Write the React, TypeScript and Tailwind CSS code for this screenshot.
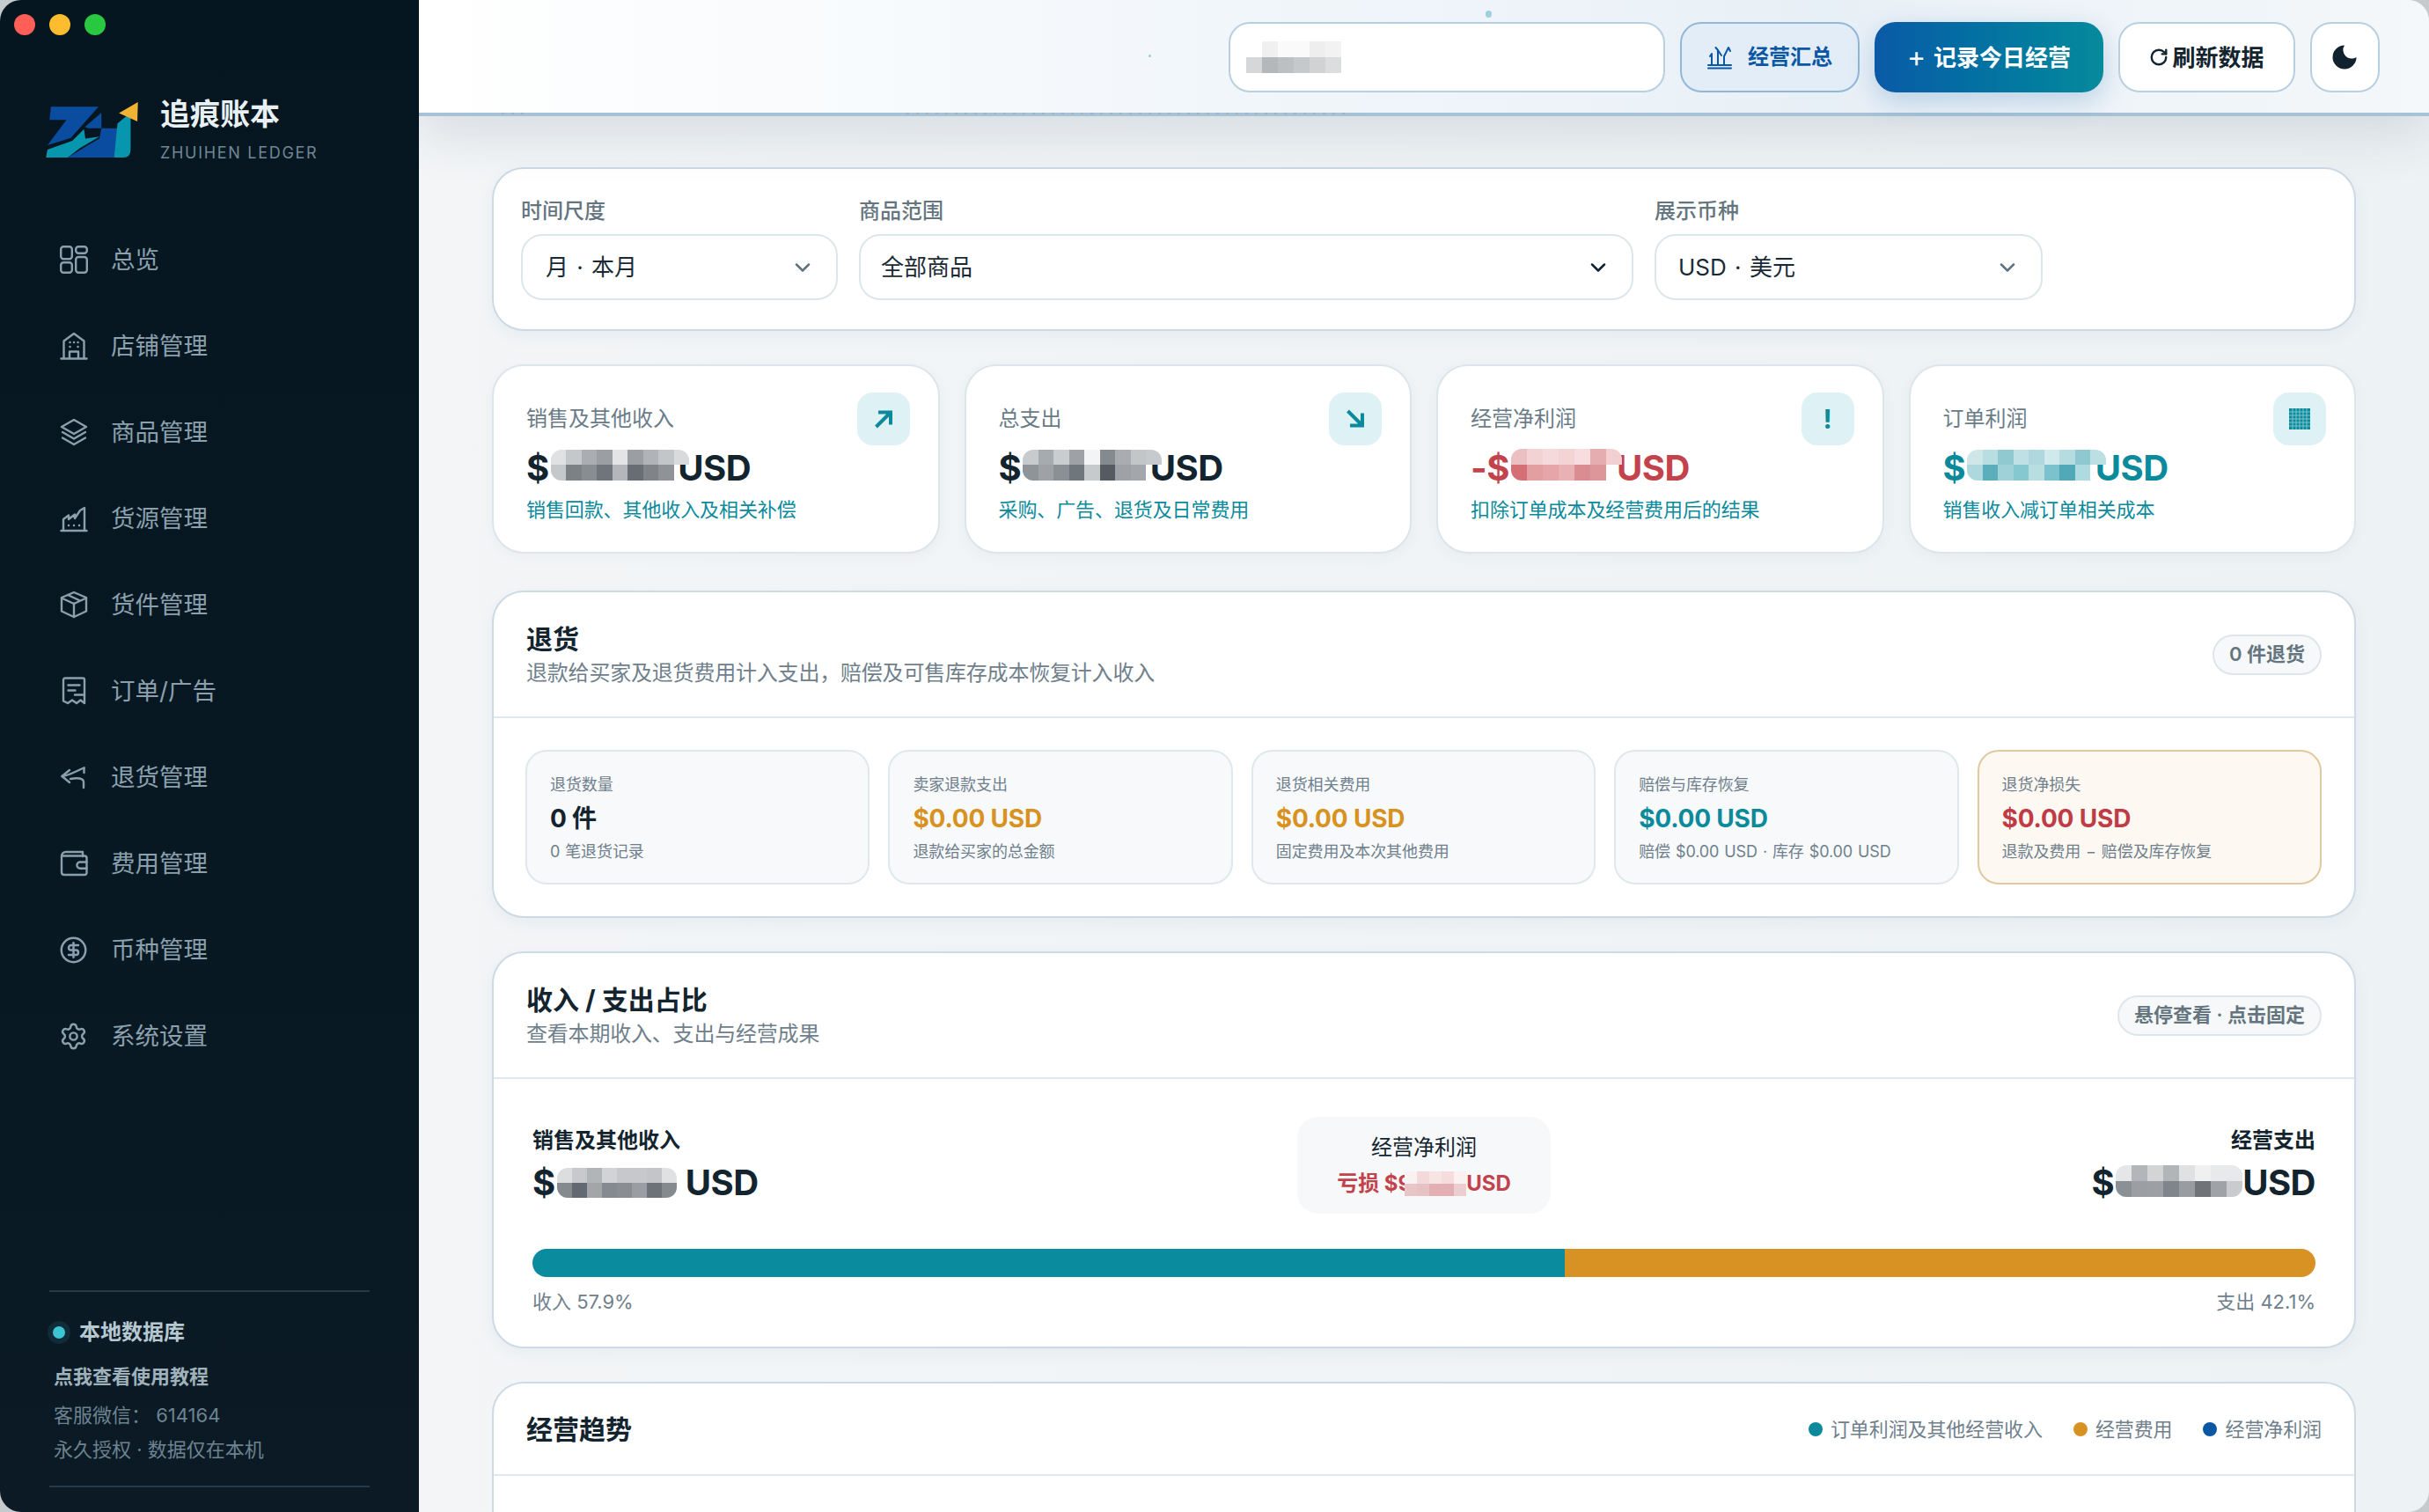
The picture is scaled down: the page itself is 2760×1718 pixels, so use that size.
import { CircleDollarSign, RotateCw, Settings } from 'lucide-react'
import type { ReactNode } from 'react'

const iconProps = {
  width: 32,
  height: 32,
  viewBox: '0 0 32 32',
  fill: 'none',
  stroke: 'currentColor',
  strokeWidth: 2.4,
  strokeLinecap: 'round' as const,
  strokeLinejoin: 'round' as const,
}

const OverviewIcon = () => (
  <svg {...iconProps}>
    <rect x="1.2" y="1.2" width="12.6" height="14" rx="3" />
    <rect x="18.2" y="1.2" width="12.6" height="7.6" rx="3" />
    <rect x="1.2" y="19.2" width="12.6" height="11.6" rx="3" />
    <rect x="18.2" y="13" width="12.6" height="17.8" rx="3" />
  </svg>
)

const StoreIcon = () => (
  <svg {...iconProps}>
    <path d="M1.5 30.5H30.5M4.5 30V10.5L16 2l11.5 8.5V30M11 30v-7.5h10V30" />
    <path d="M11.5 12h.1M16 12h.1M20.5 12h.1M11.5 17h.1M20.5 17h.1" />
  </svg>
)

const LayersIcon = () => (
  <svg {...iconProps}>
    <path d="M16 2 30 10l-14 8L2 10Z" />
    <path d="M3 16l13 7.5L29 16M3 22.5 16 30l13-7.5" />
  </svg>
)

const FactoryIcon = () => (
  <svg {...iconProps}>
    <path d="M1.5 30H30.5M4 30V17l6-4.5V17l7-5.5V16l6-9 5-3v26" />
    <path d="M10 24h.1M16 24h.1M22 24h.1" />
  </svg>
)

const BoxIcon = () => (
  <svg {...iconProps}>
    <path d="M16 2 30 8v15.5L16 30 2 23.5V8Z" />
    <path d="M2 8.5 16 15l14-6.5M16 15v15M9 5l14 6.5" />
  </svg>
)

const ReceiptIcon = () => (
  <svg {...iconProps}>
    <path d="M4 3.5C4 2.5 5 1.5 6 1.5h20c1 0 2 1 2 2V30l-4.5-3.5L19 30l-5-3.5L9 30l-5-2.5Z" />
    <path d="M9.5 9.5h13M9.5 15.5h8M17 20.5h10" />
  </svg>
)

const ReturnIcon = () => (
  <svg {...iconProps}>
    <path d="M11 8 2.5 15 11 22" />
    <path d="M2.5 15c9-1 16-6 25-9.5M12 18c6-1 14-1.500 15 3v7" />
    <path d="M27.500 5.500V11" />
  </svg>
)

const WalletIcon = () => (
  <svg {...iconProps}>
    <path d="M2 8c0-3 2-5 5-5h19v5M2 8v18c0 2 1 3 3 3h23c1.500 0 2.500-1 2.500-2.500V10c0-1.500-1-2.500-2.500-2.500H2" />
    <path d="M30.500 14.500H23a3.600 3.600 0 0 0 0 7.200h7.500" />
  </svg>
)

const navItems: { label: string; icon: ReactNode }[] = [
  { label: '总览', icon: <OverviewIcon /> },
  { label: '店铺管理', icon: <StoreIcon /> },
  { label: '商品管理', icon: <LayersIcon /> },
  { label: '货源管理', icon: <FactoryIcon /> },
  { label: '货件管理', icon: <BoxIcon /> },
  { label: '订单/广告', icon: <ReceiptIcon /> },
  { label: '退货管理', icon: <ReturnIcon /> },
  { label: '费用管理', icon: <WalletIcon /> },
  { label: '币种管理', icon: <CircleDollarSign size={33} strokeWidth={1.8} /> },
  { label: '系统设置', icon: <Settings size={33} strokeWidth={1.8} /> },
]

// pixelated patches over the hidden amounts
const Mosaic = ({ rows, cell, className }: { rows: string[][]; cell: number; className?: string }) => (
  <span className={`inline-flex flex-col overflow-hidden rounded-[12px] align-middle relative z-10 ${className ?? ''}`}>
    {rows.map((row, i) => (
      <span key={i} className="flex">
        {row.map((c, j) => (
          <span key={j} style={{ backgroundColor: c, width: cell, height: 18 > cell ? cell : 18 }} />
        ))}
      </span>
    ))}
  </span>
)

const Logo = () => (
  <svg width="105" height="63" viewBox="155 347 315 190">
    <polygon points="172,363 335,363 240,470 160,495 225,408 167,408" fill="#0a4da0" />
    <polygon points="160,510 245,480 285,440 290,472 338,465 270,505 230,537 155,537" fill="#0895ae" />
    <polygon points="230,537 295,497 338,472 345,437 400,437 388,537" fill="#0a4da0" />
    <polygon points="345,383 345,437 300,437 288,432" fill="#0a4da0" />
    <path d="M388 537 400 420 445 383V510Q445 537 420 537Z" fill="#0895ae" />
    <polygon points="405,385 470,347 468,413" fill="#f0b232" />
  </svg>
)

const Sidebar = () => (
  <aside className="flex h-full w-[476px] shrink-0 flex-col bg-gradient-to-b from-[#051620] to-[#0b1a25]">
    <div className="flex gap-[16px] pl-[16px] pt-[16px]">
      <span className="h-[24px] w-[24px] rounded-full bg-[#ff5f57]" />
      <span className="h-[24px] w-[24px] rounded-full bg-[#febc2e]" />
      <span className="h-[24px] w-[24px] rounded-full bg-[#28c840]" />
    </div>
    <div className="mt-[69px] flex items-center gap-[25px] pl-[52px]">
      <Logo />
      <div>
        <div className="text-[34px] leading-[42px] font-bold text-[#e8f0f3]">追痕账本</div>
        <div className="mt-[11px] text-[18px] leading-[24px] tracking-[1.7px] text-[#6f8796]">ZHUIHEN LEDGER</div>
      </div>
    </div>
    <nav className="mt-[60px] flex flex-col pl-[67px]">
      {navItems.map((item) => (
        <div key={item.label} className="flex h-[98px] items-center gap-[26px] text-[#8ba0ad]">
          <span className="flex w-[33px] justify-center">{item.icon}</span>
          <span className="text-[27.500px] leading-[36px]">{item.label}</span>
        </div>
      ))}
    </nav>
    <div className="mt-auto mx-[56px] mb-[28px] flex flex-col">
      <div className="border-t-2 border-[#26394a] pt-[30px]">
        <div className="-ml-[2px] flex items-center gap-[10px]">
          <span className="flex h-[26px] w-[26px] items-center justify-center rounded-full bg-[#0f2c38]">
            <span className="h-[14px] w-[14px] rounded-full bg-[#3cc6d4]" />
          </span>
          <span className="text-[24px] leading-[32px] font-semibold text-[#b7c9d0]">本地数据库</span>
        </div>
        <div className="mt-[18px] ml-[5px] text-[22px] leading-[32px] font-semibold text-[#9fb2bb]">点我查看使用教程</div>
        <div className="mt-[12px] ml-[5px] text-[22px] leading-[32px] text-[#6d8390]">客服微信： 614164</div>
        <div className="mt-[7px] ml-[5px] text-[22px] leading-[32px] text-[#6d8390]">永久授权 · 数据仅在本机</div>
      </div>
      <div className="mt-[25px] border-t-2 border-[#26394a]" />
    </div>
  </aside>
)

const TopBar = () => (
  <header className="relative z-20 flex h-[132px] shrink-0 items-center justify-end gap-[17px] border-b-[4px] border-[#a6c2d6] bg-gradient-to-r from-[#ffffff] via-[#e8f0f7] via-70% to-[#f5f8fa] pr-[56px] pt-[2px] shadow-[0_20px_60px_rgba(40,70,90,0.14)]">
    <span className="absolute left-[829px] top-[62px] h-[3px] w-[3px] rounded-full bg-[#8fd0dc]" />
    <span className="absolute left-[1212px] top-[12px] h-[8px] w-[7px] rounded-full bg-[#9fd0dc]" />
    {/* bits of the scrolled page that peek out below the bar */}
    <span className="absolute left-[94px] top-[128px] h-[2px] w-[30px] bg-[repeating-linear-gradient(90deg,#a8b2b8_0_3px,transparent_3px_11px)]" />
    <span className="absolute left-[554px] top-[128px] h-[2px] w-[500px] bg-[repeating-linear-gradient(90deg,#a8b2b8_0_3px,transparent_3px_11px)]" />
    <div className="flex h-[80px] w-[496px] items-center rounded-[24px] border-[2px] border-[#b8cfe0] bg-white pl-[18px]">
      <Mosaic
        cell={18}
        className="rounded-none"
        rows={[
          ['#ffffff', '#f0f0f0', '#fafafa', '#fafafa', '#eeeeee', '#f2f2f2'],
          ['#d5d7d8', '#b4b8ba', '#bcc0c2', '#c6c9cb', '#d0d2d4', '#dcdddf'],
        ]}
      />
    </div>
    <button className="flex h-[80px] w-[204px] items-center justify-center gap-[18px] rounded-[24px] border-[2px] border-[#93b7d6] bg-[#e3edf7] text-[24px] font-semibold text-[#0b57a4]">
      <svg width="28" height="28" viewBox="0 0 28 28" fill="none" stroke="currentColor" strokeWidth="2" strokeLinecap="round" strokeLinejoin="round">
        <path d="M1 26.500h26M1 23h26M5 22V10L3 13M12 22V6L9.500 3M12 6l4 6M19 22V13l5-10 2 4" />
      </svg>
      经营汇总
    </button>
    <button className="flex h-[80px] w-[260px] items-center justify-center gap-[9px] rounded-[24px] bg-gradient-to-r from-[#0b5aa6] to-[#078a9c] text-[26px] font-semibold text-white shadow-[0_10px_30px_rgba(11,87,164,0.22)]">
      <span className="text-[32px] leading-[32px] font-normal">+</span>
      记录今日经营
    </button>
    <button className="flex h-[80px] w-[201px] items-center justify-center gap-[4px] rounded-[24px] border-[2px] border-[#b8cfe0] bg-white text-[26px] font-semibold text-[#13242f]">
      <RotateCw size={22} strokeWidth={2.6} />
      刷新数据
    </button>
    <button className="flex h-[80px] w-[79px] items-center justify-center rounded-[24px] border-[2px] border-[#b8cfe0] bg-white text-[#11212d]">
      <svg width="36" height="36" viewBox="0 0 24 24" fill="currentColor" className="-translate-x-[1px]">
        <path d="M12 3a6.500 6.500 0 0 0 9 9 9 9 0 1 1-9-9Z" />
      </svg>
    </button>
  </header>
)

type SelectProps = { label: string; value: string; className: string; inset: string; chevron: string }

const Select = ({ label, value, className, inset, chevron }: SelectProps) => (
  <div className={className}>
    <div className="text-[24px] leading-[32px] font-medium text-[#64757f]">{label}</div>
    <div className={`mt-[10px] flex h-[75px] items-center justify-between rounded-[24px] border-[2px] border-[#dde7eb] bg-white pr-[29px] text-[26px] text-[#1a2a35] [word-spacing:2px] ${inset}`}>
      {value}
      <svg width="18" height="10" viewBox="0 0 18 10" fill="none" stroke={chevron} strokeWidth="2.500" strokeLinecap="round" strokeLinejoin="round">
        <path d="M2 1.500 9 8.500l7-7" />
      </svg>
    </div>
  </div>
)

const FilterCard = () => (
  <section className="flex h-[186px] gap-[24px] rounded-[36px] border-[2px] border-[#cbdae5] bg-white pl-[31px] pt-[32px] shadow-[0_6px_20px_rgba(40,80,110,0.05)]">
    <Select label="时间尺度" value="月 · 本月" className="w-[360px]" inset="pl-[26px]" chevron="#5f7280" />
    <Select label="商品范围" value="全部商品" className="w-[880px]" inset="pl-[23px]" chevron="#13242f" />
    <Select label="展示币种" value="USD · 美元" className="w-[441px]" inset="pl-[25px]" chevron="#5f7280" />
  </section>
)

type StatProps = {
  label: string
  prefix: string
  tone: string
  sub: string
  icon: ReactNode
  cell: number
  overlap: string
  rows: string[][]
}

const ArrowUpRight = () => (
  <svg width="22" height="22" viewBox="0 0 22 22" fill="none" stroke="currentColor" strokeWidth="4" strokeLinejoin="miter">
    <path d="M2.500 20 18 4.500M5 3.500h14v14" />
  </svg>
)
const ArrowDownRight = () => (
  <svg width="22" height="22" viewBox="0 0 22 22" fill="none" stroke="currentColor" strokeWidth="4" strokeLinejoin="miter">
    <path d="M2.500 2 18 17.500M5 18.500h14v-14" />
  </svg>
)
const GridBlock = () => (
  <svg width="24" height="24" viewBox="0 0 24 24">
    <rect width="24" height="24" fill="#0b8a9c" />
    <path d="M0 4h24M0 8h24M0 12h24M0 16h24M0 20h24M4 0v24M8 0v24M12 0v24M16 0v24M20 0v24" stroke="#7cc4ce" strokeWidth="1" />
  </svg>
)

const StatCard = ({ label, prefix, tone, sub, icon, cell, overlap, rows }: StatProps) => (
  <div className="flex h-[215px] justify-between rounded-[36px] border-[2px] border-[#dbe5ea] bg-white pl-[37px] pr-[32px] pt-[30px] shadow-[0_4px_16px_rgba(40,80,110,0.04)]">
    <div className="pt-[14px]">
      <div className="text-[24px] leading-[32px] text-[#6a7c88]">{label}</div>
      <div className={`mt-[16px] flex h-[48px] items-center text-[40px] leading-[48px] font-bold tracking-[-0.5px] ${tone}`}>
        {prefix}
        <Mosaic rows={rows} cell={cell} className={`ml-[2px] -translate-y-[4px] ${overlap}`} />
        USD
      </div>
      <div className="mt-[8px] text-[22px] leading-[30px] tracking-[-0.1px] text-[#0b8a9c]">{sub}</div>
    </div>
    <div className="flex h-[60px] w-[60px] items-center justify-center rounded-[18px] bg-[#def1f5] text-[#0b8a9c]">{icon}</div>
  </div>
)

const stats: StatProps[] = [
  {
    label: '销售及其他收入',
    prefix: '$',
    tone: 'text-[#13242f]',
    sub: '销售回款、其他收入及相关补偿',
    icon: <ArrowUpRight />,
    cell: 17.5,
    overlap: '-mr-[13px]',
    rows: [
      ['#dfe1e3', '#c5c8cb', '#aaadb1', '#9b9fa3', '#e3e4e6', '#9b9ea2', '#b0b3b7', '#c3c6c9', '#d8dadb'],
      ['#c5c8cb', '#7c8186', '#888d92', '#6f757b', '#b3b6ba', '#686d73', '#808489', '#8f9397', 'transparent'],
    ],
  },
  {
    label: '总支出',
    prefix: '$',
    tone: 'text-[#13242f]',
    sub: '采购、广告、退货及日常费用',
    icon: <ArrowDownRight />,
    cell: 17.5,
    overlap: '-mr-[13px]',
    rows: [
      ['#c8cbce', '#a6abaf', '#cacdd0', '#9ea2a6', '#f3f4f5', '#858a8f', '#a9acb0', '#c3c6c9', '#c7cacd'],
      ['#8f9498', '#9ea2a6', '#8a9094', '#6f767c', '#c7cacd', '#555b61', '#9ea2a6', '#a3a6aa', 'transparent'],
    ],
  },
  {
    label: '经营净利润',
    prefix: '-$',
    tone: 'text-[#c2434b]',
    sub: '扣除订单成本及经营费用后的结果',
    icon: <span className="text-[30px] font-bold">!</span>,
    cell: 18,
    overlap: '-mr-[6px]',
    rows: [
      ['#ecc0c2', '#f3d2d3', '#f6dadb', '#f4d3d5', '#f7dddf', '#e6adb0', '#f2cfd1'],
      ['#d46f76', '#e39ea2', '#e6a5a9', '#e8b2b5', '#d98d90', '#dd9699', 'transparent'],
    ],
  },
  {
    label: '订单利润',
    prefix: '$',
    tone: 'text-[#0b8a9c]',
    sub: '销售收入减订单相关成本',
    icon: <GridBlock />,
    cell: 17.5,
    overlap: '-mr-[12px]',
    rows: [
      ['#d0e7ea', '#b8dde2', '#91c9d1', '#bfe0e4', '#afd8de', '#d0e9ec', '#b4dce1', '#8fc8d0', '#bcdfe3'],
      ['#acd8de', '#5bafbd', '#9ed2d8', '#86c8d0', '#b8dee2', '#7cc2cc', '#51a9b8', '#aedbe0', 'transparent'],
    ],
  },
]

const Pill = ({ children }: { children: ReactNode }) => (
  <span className="flex h-[46px] items-center rounded-full border-[2px] border-[#dde7eb] bg-[#f6f8fa] px-[17px] text-[22px] font-semibold text-[#64757f]">
    {children}
  </span>
)

const PanelHead = ({ title, sub, pill }: { title: string; sub: string; pill: string }) => (
  <div className="flex h-[143px] items-center justify-between border-b-[2px] border-[#dfe8ec] pl-[37px] pr-[37px]">
    <div>
      <div className="text-[30px] leading-[40px] font-bold text-[#13242f]">{title}</div>
      <div className="mt-[2px] text-[24px] leading-[34px] tracking-[-0.2px] text-[#6f808c]">{sub}</div>
    </div>
    <Pill>{pill}</Pill>
  </div>
)

const returnCards = [
  { label: '退货数量', value: '0 件', tone: 'text-[#13242f]', sub: '0 笔退货记录' },
  { label: '卖家退款支出', value: '$0.00 USD', tone: 'text-[#d8921f]', sub: '退款给买家的总金额' },
  { label: '退货相关费用', value: '$0.00 USD', tone: 'text-[#d8921f]', sub: '固定费用及本次其他费用' },
  { label: '赔偿与库存恢复', value: '$0.00 USD', tone: 'text-[#0b8a9c]', sub: '赔偿 $0.00 USD · 库存 $0.00 USD' },
  { label: '退货净损失', value: '$0.00 USD', tone: 'text-[#bf3b45]', sub: '退款及费用 − 赔偿及库存恢复', warn: true },
]

const ReturnsPanel = () => (
  <section className="rounded-[36px] border-[2px] border-[#cbdae5] bg-white shadow-[0_6px_20px_rgba(40,80,110,0.05)]">
    <PanelHead title="退货" sub="退款给买家及退货费用计入支出，赔偿及可售库存成本恢复计入收入" pill="0 件退货" />
    <div className="grid grid-cols-5 gap-[21px] pl-[36px] pr-[37px] pt-[36px] pb-[36px]">
      {returnCards.map((c) => (
        <div
          key={c.label}
          className={`h-[153px] rounded-[24px] border-[2px] pl-[26px] pt-[25px] ${c.warn ? 'border-[#e0c89f] bg-[#fdf8f2]' : 'border-[#dfe8ec] bg-[#f7f9fb]'}`}
        >
          <div className="text-[18px] leading-[26px] tracking-[-0.1px] text-[#6f808c]">{c.label}</div>
          <div className={`mt-[7px] text-[28px] leading-[36px] font-bold tracking-[-0.2px] ${c.tone}`}>{c.value}</div>
          <div className="mt-[7px] text-[18px] leading-[26px] tracking-[-0.1px] text-[#6f808c] [word-spacing:1px]">{c.sub}</div>
        </div>
      ))}
    </div>
  </section>
)

const RatioPanel = () => (
  <section className="rounded-[36px] border-[2px] border-[#cbdae5] bg-white shadow-[0_6px_20px_rgba(40,80,110,0.05)]">
    <PanelHead title="收入 / 支出占比" sub="查看本期收入、支出与经营成果" pill="悬停查看 · 点击固定" />
    <div className="pl-[44px] pr-[44px] pt-[43px] pb-[36px]">
      <div className="grid grid-cols-[1fr_288px_1fr] items-center">
        <div>
          <div className="text-[24px] leading-[32px] font-semibold text-[#13242f]">销售及其他收入</div>
          <div className="mt-[8px] flex h-[48px] items-center text-[40px] leading-[48px] font-bold tracking-[-0.5px] text-[#13242f]">
            $
            <Mosaic
              cell={17}
              className="ml-[2px] mr-[10px]"
              rows={[
                ['#dcdddf', '#c7c9cc', '#b2b5b8', '#d2d3d6', '#c6c8cb', '#c6c8cb', '#c3c5c8', '#e0e1e3'],
                ['#858a8e', '#636970', '#a2a6a9', '#858a90', '#8a8e93', '#9a9ea2', '#6d7278', '#858a8e'],
              ]}
            />
            USD
          </div>
        </div>
        <div className="flex h-[110px] flex-col items-center rounded-[24px] bg-[#f6f8fa] pt-[19px]">
          <div className="text-[24px] leading-[32px] text-[#13242f]">经营净利润</div>
          <div className="mt-[9px] flex h-[32px] items-center text-[24px] leading-[32px] font-bold text-[#c2434b]">
            亏损 $9
            <Mosaic
              cell={14}
              className="-ml-[8px] rounded-none"
              rows={[
                ['#f9f2f2', '#f4d9da', '#f7e4e5', '#f6dcdd', '#fbf1f1'],
                ['#e8c5c7', '#e6c2c4', '#e3afb2', '#e3afb2', '#ecced0'],
              ]}
            />
            USD
          </div>
        </div>
        <div className="flex flex-col items-end">
          <div className="text-[24px] leading-[32px] font-semibold text-[#13242f]">经营支出</div>
          <div className="mt-[8px] flex h-[48px] items-center text-[40px] leading-[48px] font-bold tracking-[-0.5px] text-[#13242f]">
            $
            <Mosaic
              cell={18}
              className="ml-[2px] -translate-y-[2px]"
              rows={[
                ['#e5e6e8', '#b3b6b9', '#d2d4d6', '#b2b5b8', '#dfe1e2', '#f0f0f1', '#e8e9ea', '#e8e9ea'],
                ['#8b9094', '#9b9fa3', '#9c9fa3', '#80858b', '#999da1', '#707479', '#9fa2a6', '#c9cbce'],
              ]}
            />
            USD
          </div>
        </div>
      </div>
      <div className="mt-[40px] flex h-[32px] overflow-hidden rounded-full">
        <div className="w-[57.9%] bg-[#0a8c9e]" />
        <div className="flex-1 bg-[#d89224]" />
      </div>
      <div className="mt-[13px] flex justify-between text-[22px] leading-[30px] text-[#6f808c]">
        <span>收入 57.9%</span>
        <span>支出 42.1%</span>
      </div>
    </div>
  </section>
)

const legend = [
  { label: '订单利润及其他经营收入', dot: 'bg-[#0b8a9c]' },
  { label: '经营费用', dot: 'bg-[#d89224]' },
  { label: '经营净利润', dot: 'bg-[#0b57a4]' },
]

const TrendPanel = () => (
  <section className="h-[300px] shrink-0 rounded-[36px] border-[2px] border-[#cbdae5] bg-white">
    <div className="flex h-[105px] items-center justify-between border-b-[2px] border-[#dfe8ec] pl-[37px] pr-[37px]">
      <div className="text-[30px] leading-[40px] font-bold text-[#13242f]">经营趋势</div>
      <div className="flex items-center gap-[35px]">
        {legend.map((l) => (
          <div key={l.label} className="flex items-center gap-[9px]">
            <span className={`h-[16px] w-[16px] rounded-full ${l.dot}`} />
            <span className="text-[22px] leading-[30px] tracking-[-0.1px] text-[#6f808c]">{l.label}</span>
          </div>
        ))}
      </div>
    </div>
  </section>
)

export default function App() {
  return (
    <div className="h-[1718px] w-[2760px] overflow-hidden bg-[#c6cacd] [font-family:Inter,'Noto_Sans_CJK_SC',sans-serif]">
      <div className="flex h-full w-full overflow-hidden rounded-[24px]">
        <Sidebar />
        <main className="flex min-w-0 flex-1 flex-col overflow-hidden bg-gradient-to-r from-[#f3f5f7] to-[#edf2f4]">
          <TopBar />
          <div className="flex flex-col gap-[38px] px-[83px] pt-[58px]">
            <FilterCard />
            <div className="mb-[4px] grid grid-cols-4 gap-[28px]">
              {stats.map((s) => (
                <StatCard key={s.label} {...s} />
              ))}
            </div>
            <ReturnsPanel />
            <RatioPanel />
            <TrendPanel />
          </div>
        </main>
      </div>
    </div>
  )
}
